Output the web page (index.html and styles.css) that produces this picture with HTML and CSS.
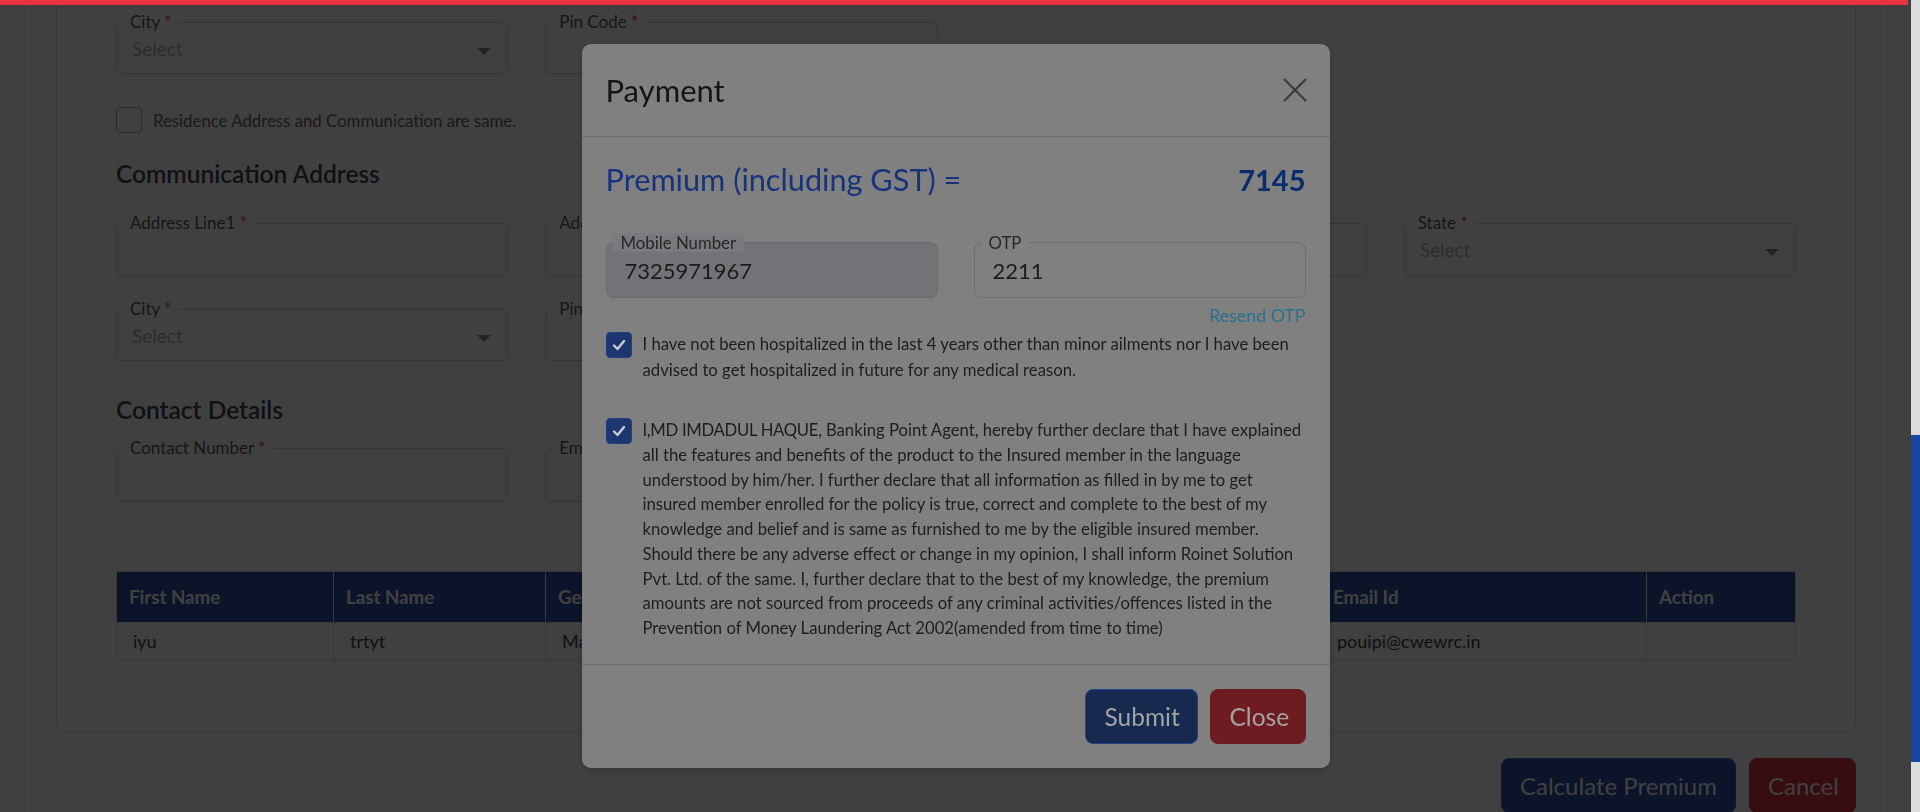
FILE: index.html
```html
<!DOCTYPE html>
<html lang="en">
<head>
<meta charset="utf-8">
<title>Insurance Enrollment - Payment</title>
<link rel="stylesheet" href="styles.css">
</head>
<body>
<div class="loader"></div>
<div class="app">
  <main class="page">
    <div class="shell">
      <section class="card">
        <div class="grid">
          <fieldset class="field sel"><legend>City <span class="req">*</span></legend><div class="value placeholder">Select<span class="caret"></span></div></fieldset>
          <fieldset class="field sel"><legend>Pin Code <span class="req">*</span></legend><div class="value"></div></fieldset>
        </div>
        <label class="same"><span class="box"></span>Residence Address and Communication are same.</label>
        <h2 class="section-title first">Communication Address</h2>
        <div class="grid row2">
          <fieldset class="field inp"><legend>Address Line1 <span class="req">*</span></legend><div class="value"></div></fieldset>
          <fieldset class="field inp"><legend>Address Line2</legend><div class="value"></div></fieldset>
          <fieldset class="field inp"><legend>Landmark</legend><div class="value"></div></fieldset>
          <fieldset class="field sel"><legend>State <span class="req">*</span></legend><div class="value placeholder">Select<span class="caret"></span></div></fieldset>
        </div>
        <div class="grid row3">
          <fieldset class="field sel"><legend>City <span class="req">*</span></legend><div class="value placeholder">Select<span class="caret"></span></div></fieldset>
          <fieldset class="field sel"><legend>Pin Code <span class="req">*</span></legend><div class="value"></div></fieldset>
        </div>
        <h2 class="section-title second">Contact Details</h2>
        <div class="grid row4">
          <fieldset class="field inp"><legend>Contact Number <span class="req">*</span></legend><div class="value"></div></fieldset>
          <fieldset class="field inp"><legend>Email Id <span class="req">*</span></legend><div class="value"></div></fieldset>
        </div>
        <table class="members">
          <colgroup>
            <col style="width:217px"><col style="width:212px"><col style="width:258px"><col style="width:258px"><col style="width:259px"><col style="width:326px"><col style="width:149px">
          </colgroup>
          <thead>
            <tr><th>First Name</th><th>Last Name</th><th>Gender</th><th>Date of Birth</th><th>Mobile Number</th><th>Email Id</th><th>Action</th></tr>
          </thead>
          <tbody>
            <tr><td>iyu</td><td>trtyt</td><td>Male</td><td>12/05/1990</td><td>7325971967</td><td>pouipi@cwewrc.in</td><td></td></tr>
          </tbody>
        </table>
      </section>
      <div class="actions">
        <button class="btn btn-navy big">Calculate Premium</button>
        <button class="btn btn-red big">Cancel</button>
      </div>
    </div>
  </main>
  <div class="scrollbar"><div class="thumb"></div></div>
</div>

<div class="backdrop">
  <div class="modal" role="dialog" aria-labelledby="payTitle">
    <div class="modal-header">
      <h3 id="payTitle">Payment</h3>
      <button class="x" aria-label="Close">
        <svg width="24" height="24" viewBox="0 0 24 24"><path d="M1 1 L23 23 M23 1 L1 23" stroke="#3c3c3c" stroke-width="2.2" fill="none"/></svg>
      </button>
    </div>
    <div class="modal-body">
      <div class="premium"><span>Premium (including GST) =</span><strong>7145</strong></div>
      <div class="otp-grid">
        <fieldset class="mfield disabled"><legend>Mobile Number</legend><div class="mvalue">7325971967</div></fieldset>
        <fieldset class="mfield"><legend>OTP</legend><div class="mvalue">2211</div></fieldset>
      </div>
      <div class="resend"><a>Resend OTP</a></div>
      <label class="check one">
        <span class="cbox"><svg width="16" height="16" viewBox="0 0 16 16"><path d="M3 8.5 L6.5 12 L13 4" stroke="#c9ccd3" stroke-width="2.4" fill="none" stroke-linecap="round" stroke-linejoin="round"/></svg></span>
        <span class="ctext">I have not been hospitalized in the last 4 years other than minor ailments nor I have been advised to get hospitalized in future for any medical reason.</span>
      </label>
      <label class="check two">
        <span class="cbox"><svg width="16" height="16" viewBox="0 0 16 16"><path d="M3 8.5 L6.5 12 L13 4" stroke="#c9ccd3" stroke-width="2.4" fill="none" stroke-linecap="round" stroke-linejoin="round"/></svg></span>
        <span class="ctext"><span class="agent">I,MD IMDADUL HAQUE,</span> Banking Point Agent, hereby further declare that I have explained all the features and benefits of the product to the Insured member in the language understood by him/her. I further declare that all information as filled in by me to get insured member enrolled for the policy is true, correct and complete to the best of my knowledge and belief and is same as furnished to me by the eligible insured member. Should there be any adverse effect or change in my opinion, I shall inform Roinet Solution Pvt. Ltd. of the same. I, further declare that to the best of my knowledge, the premium amounts are not sourced from proceeds of any criminal activities/offences listed in the Prevention of Money Laundering Act 2002(amended from time to time)</span>
      </label>
    </div>
    <div class="modal-footer">
      <button class="mbtn submit">Submit</button>
      <button class="mbtn closeb">Close</button>
    </div>
  </div>
</div>
</body>
</html>
```

FILE: styles.css
```css
* { box-sizing: border-box; }
html, body { margin: 0; padding: 0; height: 100%; overflow: hidden; }
body { font-family: Lato, "Open Sans", sans-serif; color: #333; background: #fff; }

.loader { position: fixed; top: 0; left: 0; width: 1908px; height: 5px; background: #e8343f; z-index: 50; }

.app { display: flex; height: 812px; }
.page { flex: 1; overflow: hidden; }
.scrollbar { width: 9px; background: #dcdcdc; }
.thumb { margin-top: 435px; height: 327px; background: #1747a6; }

.shell { margin-left: 31px; width: 1850px; border-left: 1px solid #e9e9e9; border-right: 1px solid #e9e9e9; padding: 0 24px; min-height: 900px; }
.card { border: 1px solid #dcdcdc; border-top: none; border-radius: 0 0 8px 8px; padding: 12px 59px 72px 59px; }

.grid { display: grid; grid-template-columns: repeat(4, 1fr); column-gap: 37px; }
.row2 { margin-top: 25px; }
.row3 { margin-top: 22px; }
.row4 { margin-top: 14px; }

.field { margin: 0; min-width: 0; border: 1px solid #d2d2d2; border-radius: 6px; padding: 5px 16px 12px 5px; }
.field legend { padding: 0 8px; font-size: 17px; line-height: 20px; color: #5a5a5a; }
.req { color: #dc3545; }
.field .value { height: 24px; line-height: 24px; padding-left: 10px; font-size: 19px; display: flex; justify-content: space-between; align-items: center; }
.field.inp .value { height: 26px; }
.placeholder { color: #b0b0b0; }
.caret { width: 0; height: 0; border-left: 7px solid transparent; border-right: 7px solid transparent; border-top: 7px solid #8c8c8c; margin-top: 4px; }

.same { display: flex; align-items: center; gap: 11px; margin-top: 33px; font-size: 16.8px; color: #666; }
.same .box { width: 26px; height: 26px; border: 1.5px solid #9aa6c4; border-radius: 4px; }

.section-title { margin: 0; font-size: 24.5px; line-height: 28px; font-weight: 600; color: #444; }
.section-title.first { margin-top: 27px; }
.section-title.second { margin-top: 35px; }

.members { margin-top: 69px; width: 100%; table-layout: fixed; border-collapse: collapse; }
.members th { height: 51px; padding: 0 12px; text-align: left; font-size: 18.7px; font-weight: 700; color: #fff; background: #2c509e; border: 1px solid #dee2e6; }
.members td { height: 37px; padding: 0 16px; font-size: 18px; color: #444; border: 1px solid #dcdcdc; white-space: nowrap; overflow: hidden; }

.actions { display: flex; justify-content: flex-end; gap: 13px; margin-top: 25px; }
.btn { font-family: inherit; border-radius: 8px; color: #fff; cursor: pointer; }
.btn.big { height: 55px; font-size: 24px; padding: 0 18px; }
.btn-navy { background: #2c509e; border: 1px solid #3d66c4; width: 235px; }
.btn-red { background: #dc3545; border: 1px solid #dc3545; width: 107px; }

.backdrop { position: fixed; top: 0; left: 0; right: 9px; bottom: 0; background: rgba(0,0,0,0.75); display: flex; align-items: center; justify-content: center; z-index: 10; }

.modal { width: 748px; background: #808080; border-radius: 9px; box-shadow: 0 2px 6px rgba(0,0,0,0.2); }
.modal-header { height: 93px; display: flex; align-items: center; justify-content: space-between; padding: 0 23px 0 24px; border-bottom: 1px solid #6f6f6f; }
.modal-header h3 { margin: 0; font-size: 31px; font-weight: 400; color: #141414; }
.x { background: none; border: 0; padding: 0; width: 24px; height: 24px; display: flex; }

.modal-body { padding: 25px 24px 23px 24px; }
.premium { display: flex; justify-content: space-between; align-items: baseline; font-size: 30.7px; line-height: 36px; color: #17337a; }
.premium strong { color: #0b2b6d; font-weight: 700; font-size: 29px; }

.otp-grid { display: grid; grid-template-columns: 1fr 1fr; column-gap: 36px; margin-top: 35px; }
.mfield { margin: 0; min-width: 0; border: 1px solid #6d6d6d; border-radius: 8px; padding: 4px 12px 11px 6px; background: #808080; }
.mfield legend { padding: 0 8px; font-size: 16.8px; line-height: 19px; color: #262626; border-radius: 4px; }
.mfield.disabled { background: #717377; border-color: #6a6c70; }
.mfield.disabled legend { background: #787a7e; }
.mvalue { height: 30px; line-height: 30px; padding-left: 12px; font-size: 22px; color: #1b1b1b; }

.resend { text-align: right; margin-top: 6px; font-size: 17.8px; line-height: 22px; color: #27718c; }

.check { display: flex; align-items: flex-start; gap: 11px; }
.cbox { flex: none; width: 26px; height: 26px; border-radius: 4px; background: #1d3670; border: 1px solid #22407f; display: flex; align-items: center; justify-content: center; margin-top: 1px; }
.ctext { font-size: 16.7px; color: #1d1d1d; }
.agent { letter-spacing: -0.3px; }
.check.one { margin-top: 5px; }
.check.one .ctext { line-height: 26px; }
.check.two { margin-top: 35px; }
.check.two .cbox { margin-top: 0; }
.check.two .ctext { line-height: 24.75px; }

.modal-footer { border-top: 1px solid #6f6f6f; padding: 24px 24px 24px; display: flex; justify-content: flex-end; gap: 12px; }
.mbtn { height: 55px; font-family: inherit; font-size: 24.5px; color: #a3a3a3; border-radius: 8px; padding: 0 19px; }
.mbtn.submit { background: #16294f; border: 1px solid #20428a; width: 113px; }
.mbtn.closeb { background: #6e1b22; border: 1px solid #6e1b22; width: 96px; }
```
